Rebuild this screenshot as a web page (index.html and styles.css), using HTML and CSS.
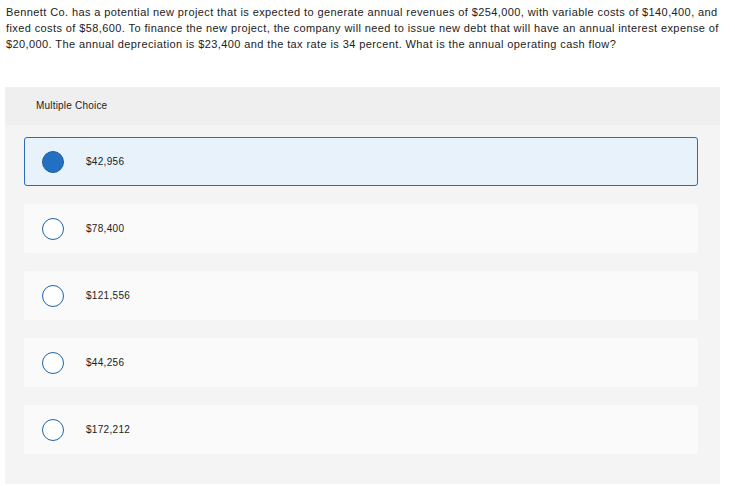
FILE: index.html
```html
<!DOCTYPE html>
<html lang="en">
<head>
    <meta charset="UTF-8">
    <title>Multiple Choice</title>
    <link rel="stylesheet" href="styles.css">
</head>
<body>
    <p class="question">Bennett Co. has a potential new project that is expected to generate annual revenues of $254,000, with variable costs of $140,400, and fixed costs of $58,600. To finance the new project, the company will need to issue new debt that will have an annual interest expense of $20,000. The annual depreciation is $23,400 and the tax rate is 34 percent. What is the annual operating cash flow?</p>

    <div class="panel">
        <div class="panel-head">Multiple Choice</div>
        <div class="choices">
            <label class="choice selected">
                <span class="radio"></span>
                <span>$42,956</span>
            </label>
            <label class="choice">
                <span class="radio"></span>
                <span>$78,400</span>
            </label>
            <label class="choice">
                <span class="radio"></span>
                <span>$121,556</span>
            </label>
            <label class="choice">
                <span class="radio"></span>
                <span>$44,256</span>
            </label>
            <label class="choice">
                <span class="radio"></span>
                <span>$172,212</span>
            </label>
        </div>
    </div>
</body>
</html>
```

FILE: styles.css
```css
body {
    font-family: 'Liberation Sans', Arial, sans-serif;
    background: #fff;
    color: #222;
    margin: 0;
    padding: 4px 0 0 6px;
}

.question {
    margin: 0;
    font-size: 11px;
    line-height: 16px;
    letter-spacing: 0.4px;
    max-width: 722px;
}

.panel {
    margin: 35px 15px 0 -1px;
    background: #f4f4f4;
    padding-bottom: 30px;
}

.panel-head {
    background: #efefef;
    height: 38px;
    line-height: 38px;
    padding-left: 31px;
    font-size: 10px;
    letter-spacing: 0.2px;
    color: #222;
}

.choices {
    display: flex;
    flex-direction: column;
    gap: 18px;
    padding: 12px 22px 0 19px;
}

.choice {
    display: flex;
    align-items: center;
    height: 49px;
    background: #fafafa;
    border-radius: 3px;
    padding-left: 18px;
    font-size: 10px;
    letter-spacing: 0.3px;
    box-sizing: border-box;
}

.choice.selected {
    background: #e8f2fb;
    border: 1px solid #2a6cb7;
    padding-left: 17px;
}

.radio {
    width: 20px;
    height: 20px;
    border: 1.5px solid #1d64a9;
    border-radius: 50%;
    background: #fff;
    margin-right: 22px;
    flex-shrink: 0;
}

.selected .radio {
    background: #2370c2;
    border-color: #1b5fa3;
}
```
